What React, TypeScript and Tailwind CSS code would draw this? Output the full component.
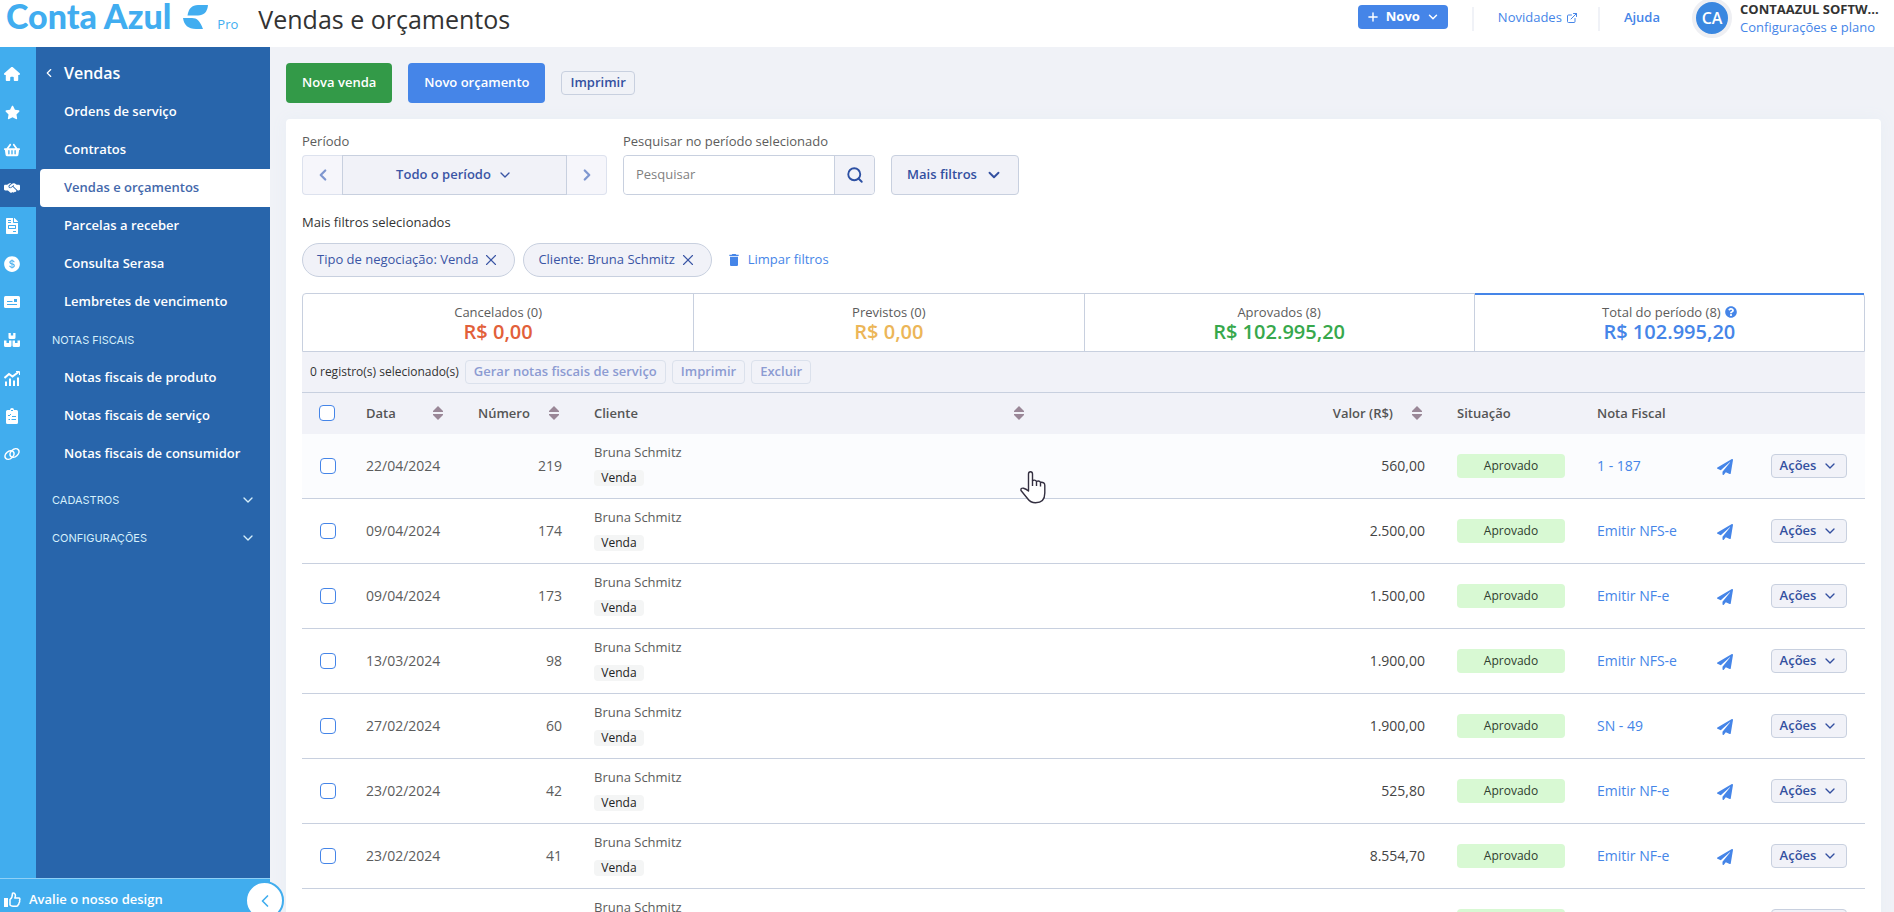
import { useState } from "react"
import type { ReactNode } from "react"
import { ChevronDown, ChevronLeft, ChevronRight, ExternalLink, Plus, Search, X } from "lucide-react"
import { FaFileInvoice, FaPaperPlane, FaQuestionCircle, FaShoppingBasket, FaStar } from "react-icons/fa"
import { FaHandshakeSimple, FaHouse } from "react-icons/fa6"
import { AiFillDollarCircle } from "react-icons/ai"
import { MdDelete } from "react-icons/md"

const sales = [
  { date: "22/04/2024", number: 219, value: "560,00", invoice: "1 - 187" },
  { date: "09/04/2024", number: 174, value: "2.500,00", invoice: "Emitir NFS-e" },
  { date: "09/04/2024", number: 173, value: "1.500,00", invoice: "Emitir NF-e" },
  { date: "13/03/2024", number: 98, value: "1.900,00", invoice: "Emitir NFS-e" },
  { date: "27/02/2024", number: 60, value: "1.900,00", invoice: "SN - 49" },
  { date: "23/02/2024", number: 42, value: "525,80", invoice: "Emitir NF-e" },
  { date: "23/02/2024", number: 41, value: "8.554,70", invoice: "Emitir NF-e" },
  { date: "23/02/2024", number: 40, value: "85.554,70", invoice: "Emitir NF-e" },
]

const totals = [
  { label: "Cancelados (0)", value: "R$ 0,00", color: "text-[#e2603a]" },
  { label: "Previstos (0)", value: "R$ 0,00", color: "text-[#ecb658]" },
  { label: "Aprovados (8)", value: "R$ 102.995,20", color: "text-[#37a84c]" },
  { label: "Total do período (8)", value: "R$ 102.995,20", color: "text-[#4585e8]" },
]

const menuTop = ["Ordens de serviço", "Contratos", "Vendas e orçamentos", "Parcelas a receber", "Consulta Serasa", "Lembretes de vencimento"]
const menuInvoices = ["Notas fiscais de produto", "Notas fiscais de serviço", "Notas fiscais de consumidor"]

function CardIcon() {
  return (
    <svg width="16" height="12" viewBox="0 0 16 12">
      <rect width="16" height="12" rx="1.5" fill="currentColor" />
      <path d="M3 5.500 H8.500 M3 8.500 H13" stroke="#41adee" strokeWidth="1.2" />
      <rect x="10" y="3" width="3" height="3" fill="#41adee" />
    </svg>
  )
}

function BoxesIcon() {
  return (
    <svg width="16" height="14" viewBox="0 0 16 14" fill="currentColor">
      <path d="M4.500 0 H6.800 V2.500 H9.200 V0 H11.500 V4.500 Q11.500 6 10 6 H6 Q4.500 6 4.500 4.500Z" />
      <path d="M0 7.500 H2.500 V10 H5 V7.500 H7.500 V12.500 Q7.500 14 6 14 H1.500 Q0 14 0 12.500Z" />
      <path d="M8.500 7.500 H11 V10 H13.500 V7.500 H16 V12.500 Q16 14 14.500 14 H10 Q8.500 14 8.500 12.500Z" />
    </svg>
  )
}

function ChartIcon() {
  return (
    <svg width="16" height="15" viewBox="0 0 16 15" fill="none" stroke="currentColor" strokeWidth="2">
      <path d="M0.500 7 L5 3 L8.500 5.500 L14.500 1" />
      <path d="M2 15 V10.500 M6 15 V7.500 M10 15 V9.500 M14 15 V6.500" />
      <path d="M12 0.500 H15.500 V4" strokeWidth="1" />
    </svg>
  )
}

function ClipboardIcon() {
  return (
    <svg width="12" height="16" viewBox="0 0 12 16">
      <path fill="currentColor" d="M1.500 2 H4 A2 2 0 0 1 8 2 H10.500 Q12 2 12 3.500 V14.500 Q12 16 10.500 16 H1.500 Q0 16 0 14.500 V3.500 Q0 2 1.500 2Z" />
      <path fill="none" stroke="#41adee" d="M2 7 L3 8 L5 6 M6 8.500 H10 M2.500 11.500 H4 M5.500 11.500 H10 M5 2.500 H7" />
    </svg>
  )
}

function ChainIcon() {
  return (
    <svg width="16" height="14" viewBox="0 0 16 14" fill="none" stroke="currentColor" strokeWidth="1.6">
      <ellipse cx="5.500" cy="8" rx="5" ry="3.600" transform="rotate(-40 5.500 8)" />
      <ellipse cx="10.500" cy="6" rx="5" ry="3.600" transform="rotate(-40 10.500 6)" />
    </svg>
  )
}

function ThumbIcon() {
  return (
    <svg width="17" height="16" viewBox="0 0 17 16" fill="none" stroke="currentColor" strokeWidth="1.5" strokeLinejoin="round">
      <path d="M0 6 H4 V15 H0Z" fill="currentColor" stroke="none" />
      <path d="M6 7.500 C8 6 8.500 4.500 8.500 1.200 C11.500 0.500 12 3.500 10.800 6 H15 Q16.500 6.500 15.500 8.500 Q16 10 15 11 Q15 12.500 14 13 Q14 14.200 12.500 14.200 H9 Q7 14 6 13Z" />
    </svg>
  )
}

function SortIcon() {
  return (
    <svg width="16" height="16" viewBox="0 0 16 16" fill="#9a8797">
      <path d="M8 1 L13 6 V7 H3 V6Z" />
      <path d="M8 15 L13 10 V9 H3 V10Z" />
    </svg>
  )
}

function Logo() {
  return (
    <a href="#" className="flex items-baseline text-[#41adf0]">
      <span className="font-[Lato] text-[34px] leading-8 font-black">Conta Azul</span>
      <svg className="ml-3" width="26" height="24" viewBox="0 0 26 24" fill="currentColor">
        <path d="M25 0 C24.500 7 20.500 10.500 15 10.500 H4.500 C5.500 3.500 9 0 15 0Z" />
        <path d="M0 13 H9 C14 13 17 16 20 24 H13 C5 24 1 20 0 13Z" />
      </svg>
      <span className="ml-2 text-[13px]">Pro</span>
    </a>
  )
}

const railIcons: ReactNode[] = [
  <FaHouse size={16} />,
  <FaStar size={15} />,
  <FaShoppingBasket size={16} />,
  <FaHandshakeSimple size={16} />,
  <FaFileInvoice size={16} />,
  <AiFillDollarCircle size={18} />,
  <CardIcon />,
  <BoxesIcon />,
  <ChartIcon />,
  <ClipboardIcon />,
  <ChainIcon />,
]

function Header() {
  return (
    <header className="flex h-[47px] shrink-0 justify-between bg-white pl-1.5 pr-3">
      <div className="flex items-baseline gap-5">
        <Logo />
        <h1 className="text-[25px] leading-8 font-medium text-[#333]">Vendas e orçamentos</h1>
      </div>
      <div className="flex items-start">
        <button className="mt-[5px] flex h-6 items-center gap-1.5 rounded bg-[#4585e8] px-2 text-[13px] font-bold text-white">
          <Plus size={14} strokeWidth={2.5} /> Novo <ChevronDown size={14} strokeWidth={2.5} />
        </button>
        <span className="mx-6 mt-[7px] h-6 w-0.5 bg-[#f0f2f7]" />
        <a href="#" className="flex h-9 items-center gap-1 text-[13px] text-[#4585e8]">
          Novidades <ExternalLink size={12} />
        </a>
        <span className="mr-6 ml-5 mt-[7px] h-6 w-0.5 bg-[#f0f2f7]" />
        <a href="#" className="flex h-9 items-center text-[13px] font-semibold text-[#4585e8]">Ajuda</a>
        <span className="-mt-0.5 mr-2 ml-8 flex size-10 items-center justify-center rounded-full border-4 border-[#eeeff3] bg-[#3a87e0] text-base font-semibold text-white">
          CA
        </span>
        <div className="flex w-[142px] flex-col text-[13px] leading-[18px]">
          <span className="truncate font-bold text-[#333]">CONTAAZUL SOFTW...</span>
          <a href="#" className="whitespace-nowrap text-[#4585e8]">Configurações e plano</a>
        </div>
      </div>
    </header>
  )
}

function Sidebar() {
  return (
    <aside className="relative flex w-[270px] shrink-0 flex-col text-[13px] text-white">
      <div className="flex flex-1">
        {/* Icon rail */}
        <nav className="flex w-9 flex-col bg-[#41adee] pt-2">
          {railIcons.map((icon, i) => (
            <a key={i} href="#" className={`flex h-[38px] items-center ${i === 3 ? "bg-[#2865ab]" : ""}`}>
              <span className="flex w-6 justify-center">{icon}</span>
            </a>
          ))}
        </nav>
        {/* Section menu */}
        <nav className="flex flex-1 flex-col bg-[#2865ab] pt-2">
          <a href="#" className="flex h-9 items-center gap-2 pl-1.5 text-base font-semibold">
            <ChevronLeft size={14} /> Vendas
          </a>
          <div className="mt-0.5 flex flex-col">
            {menuTop.map((item) => (
              <a
                key={item}
                href="#"
                className={`ml-1 flex h-[38px] items-center rounded-l pl-6 font-semibold ${item === "Vendas e orçamentos" ? "bg-white text-[#4468ab]" : ""}`}
              >
                {item}
              </a>
            ))}
          </div>
          <span className="flex h-[38px] items-center pl-4 font-[Inter] text-[11px] text-[#d5effb]">NOTAS FISCAIS</span>
          {menuInvoices.map((item) => (
            <a key={item} href="#" className="ml-1 flex h-[38px] items-center pl-6 font-semibold">{item}</a>
          ))}
          <div className="mt-2 flex flex-col">
            {["CADASTROS", "CONFIGURAÇÕES"].map((item) => (
              <button key={item} className="flex h-[38px] items-center justify-between pr-3.5 pl-4 font-[Inter] text-[11px] text-[#d5effb]">
                {item} <ChevronDown size={16} />
              </button>
            ))}
          </div>
        </nav>
      </div>
      <a href="#" className="-mb-2 flex h-[42px] items-center gap-2 border-t border-[#8fd0f6] bg-[#41adee] pl-1 font-semibold">
        <ThumbIcon /> Avalie o nosso design
      </a>
      <button aria-label="Recolher menu" className="absolute -right-3.5 -bottom-2 z-10 flex size-[39px] items-center justify-center rounded-full border-2 border-[#41adee] bg-white text-[#41adee]">
        <ChevronLeft size={20} />
      </button>
    </aside>
  )
}

function Filters() {
  const [search, setSearch] = useState("")
  return (
    <>
      <div className="flex items-end gap-4">
        <div>
          <p className="mb-1 text-[13px] leading-5 text-[#5c5c5c]">Período</p>
          <div className="flex h-10 text-[#3a55a5]">
            <button aria-label="Período anterior" className="flex w-10 items-center justify-center rounded-l border border-r-0 border-[#dde2ee] bg-[#f6f6fb] text-[#7f97d0]">
              <ChevronLeft size={18} strokeWidth={3} />
            </button>
            <button className="flex w-[225px] items-center justify-center gap-1.5 border border-[#c8d0df] bg-[#f1f2f8] text-[13px] font-semibold">
              Todo o período <ChevronDown size={16} />
            </button>
            <button aria-label="Próximo período" className="flex w-10 items-center justify-center rounded-r border border-l-0 border-[#dde2ee] bg-[#f6f6fb] text-[#7f97d0]">
              <ChevronRight size={18} strokeWidth={3} />
            </button>
          </div>
        </div>
        <div>
          <label htmlFor="search" className="mb-1 block text-[13px] leading-5 text-[#5c5c5c]">Pesquisar no período selecionado</label>
          <div className="flex h-10 w-[252px] rounded border border-[#c8d0df]">
            <input
              id="search"
              value={search}
              onChange={(e) => setSearch(e.target.value)}
              placeholder="Pesquisar"
              className="min-w-0 flex-1 rounded-l bg-white px-3 text-[13px] outline-none placeholder:text-[#7f7f7f]"
            />
            <button aria-label="Pesquisar" className="flex w-10 items-center justify-center rounded-r border-l border-[#c8d0df] bg-[#f1f2f8] text-[#2d50a3]">
              <Search size={18} strokeWidth={2.5} />
            </button>
          </div>
        </div>
        <button className="flex h-10 w-32 items-center justify-center gap-2 rounded border border-[#c8d0df] bg-[#f1f2f8] text-[13px] font-semibold text-[#3350a0]">
          Mais filtros <ChevronDown size={18} strokeWidth={2.5} />
        </button>
      </div>

      <p className="mt-4 text-[13px] leading-[22px] text-[#333]">Mais filtros selecionados</p>
      <div className="mt-2.5 flex h-[34px] items-stretch gap-2 text-[13px]">
        {["Tipo de negociação: Venda", "Cliente: Bruna Schmitz"].map((chip) => (
          <span key={chip} className="flex items-center gap-1 rounded-full border border-[#c8d0df] bg-[#f1f2f8] pr-3.5 pl-3.5 text-[#3a55a5]">
            {chip}
            <button aria-label={`Remover ${chip}`}><X size={18} strokeWidth={1.5} /></button>
          </span>
        ))}
        <button className="ml-1.5 flex items-center gap-1.5 text-[#4585e8]">
          <MdDelete size={16} /> Limpar filtros
        </button>
      </div>
    </>
  )
}

function SalesTable() {
  const [active, setActive] = useState(3)
  return (
    <>
      <div className="mt-4 grid h-[59px] grid-cols-4 rounded-t border border-[#c8d0df]">
        {totals.map((total, i) => (
          <button
            key={total.label}
            onClick={() => setActive(i)}
            className={`relative flex flex-col items-center justify-center pb-0.5 ${i > 0 ? "border-l border-[#c8d0df]" : ""}`}
          >
            {active === i && <span className="absolute -top-px right-0 left-0 h-0.5 bg-[#4585e8]" />}
            <span className="flex items-center gap-1 text-[13px] leading-5 text-[#5c5c5c]">
              {total.label} {i === 3 && <FaQuestionCircle size={12} className="text-[#4585e8]" />}
            </span>
            <span className={`text-xl leading-5 font-semibold ${total.color}`}>{total.value}</span>
          </button>
        ))}
      </div>

      <div className="flex h-10 items-center gap-1.5 bg-[#f1f2f8] px-2 text-xs text-[#333]">
        0 registro(s) selecionado(s)
        {["Gerar notas fiscais de serviço", "Imprimir", "Excluir"].map((action) => (
          <button key={action} disabled className="h-6 rounded border border-[#dbe1ec] px-2 text-[13px] font-semibold text-[#8c9bd2]">
            {action}
          </button>
        ))}
      </div>

      <table className="w-full table-fixed border-t border-[#c8d0df] text-left text-[13px] text-[#5c5c5c]">
        <colgroup>
          <col className="w-12" />
          <col className="w-28" />
          <col className="w-[116px]" />
          <col className="w-[465px]" />
          <col />
          <col className="w-[140px]" />
          <col className="w-[120px]" />
          <col className="w-[54px]" />
          <col className="w-[110px]" />
        </colgroup>
        <thead className="bg-[#f1f2f8] text-[13px] text-[#555]">
          <tr className="h-[41px]">
            <th className="pl-[17px]">
              <input type="checkbox" aria-label="Selecionar todos" className="block size-4 appearance-none rounded border border-[#4585e8] bg-white checked:bg-[#4585e8]" />
            </th>
            <th className="px-4 font-semibold"><div className="flex items-center justify-between">Data <SortIcon /></div></th>
            <th className="px-4 font-semibold"><div className="flex items-center justify-between">Número <SortIcon /></div></th>
            <th className="px-4 font-semibold"><div className="flex items-center justify-between">Cliente <SortIcon /></div></th>
            <th className="px-4 font-semibold"><div className="flex items-center justify-end gap-4">Valor (R$) <SortIcon /></div></th>
            <th className="px-4 font-semibold">Situação</th>
            <th className="px-4 font-semibold">Nota Fiscal</th>
            <th />
            <th />
          </tr>
        </thead>
        <tbody>
          {sales.map((sale) => (
            <tr key={sale.number} className="h-[65px] border-b border-[#c8d0df] first:bg-[#fbfcfe]">
              <td className="pl-[18px]">
                <input type="checkbox" aria-label={`Selecionar venda ${sale.number}`} className="block size-4 appearance-none rounded border border-[#4585e8] bg-white checked:bg-[#4585e8]" />
              </td>
              <td className="px-4 text-sm">{sale.date}</td>
              <td className="px-4 text-right text-sm">{sale.number}</td>
              <td className="px-4 pb-1">
                <div className="leading-5">Bruna Schmitz</div>
                <span className="mt-2 block w-[50px] rounded bg-[#f4f5f5] text-center text-xs leading-4 font-medium text-[#222]">Venda</span>
              </td>
              <td className="px-4 text-right text-sm text-[#444]">{sale.value}</td>
              <td className="px-4">
                <span className="flex h-6 items-center justify-center rounded bg-[#d8f9d3] text-xs font-medium text-[#2f3d2f]">Aprovado</span>
              </td>
              <td className="pl-4"><a href="#" className="text-sm whitespace-nowrap text-[#4585e8]">{sale.invoice}</a></td>
              <td className="pt-0.5 pl-4">
                <button aria-label="Enviar" className="block text-[#4585e8]"><FaPaperPlane size={16} /></button>
              </td>
              <td className="pl-4">
                <button className="flex h-6 w-[76px] items-center justify-center gap-1.5 rounded border border-[#c8d0df] bg-[#f1f2f8] text-[13px] font-semibold text-[#3350a0]">
                  Ações <ChevronDown size={16} />
                </button>
              </td>
            </tr>
          ))}
        </tbody>
      </table>
    </>
  )
}

export default function App() {
  return (
    <div className="relative flex h-screen flex-col overflow-hidden bg-[#f0f2f7] font-['Open_Sans',sans-serif]">
      <Header />
      <div className="flex min-h-0 flex-1">
        <Sidebar />
        <main className="min-w-0 flex-1 overflow-hidden px-4 pt-4 pr-[13px]">
          <div className="flex items-center gap-4 text-[13px]">
            <button className="h-10 rounded bg-[#339a48] px-4 font-semibold text-white">Nova venda</button>
            <button className="h-10 rounded bg-[#4585e8] px-4 font-semibold text-white">Novo orçamento</button>
            <button className="h-6 rounded border border-[#c8d0df] px-2 font-semibold text-[#3350a0]">Imprimir</button>
          </div>
          <section className="mt-4 rounded bg-white px-4 pt-3 shadow-[0_0_16px_#e8eef5]">
            <Filters />
            <SalesTable />
          </section>
        </main>
      </div>

      {/* Mouse pointer over the first row */}
      <svg className="pointer-events-none absolute top-[471px] left-[1020px]" width="26" height="33" viewBox="0 0 26 33" fill="#fff" stroke="#332f40" strokeWidth="1.4" strokeLinejoin="round">
        <path d="M8.500 20 V3 Q8.500 0.800 10.500 0.800 Q12.500 0.800 12.500 3 V9.500 Q15.500 8.500 16.500 10.300 Q19.500 9.300 20.500 11.300 Q24.800 10.800 24.800 14.500 V22 Q24.800 31.800 15.500 31.800 Q10.500 31.800 7.500 27.500 L1 19.500 Q0.500 16.800 3.500 17.200 Q6 17.800 8.500 20Z" />
        <path d="M12.500 9.500 V15 M16.500 10.300 V15 M20.500 11.300 V15.500" />
      </svg>
    </div>
  )
}
